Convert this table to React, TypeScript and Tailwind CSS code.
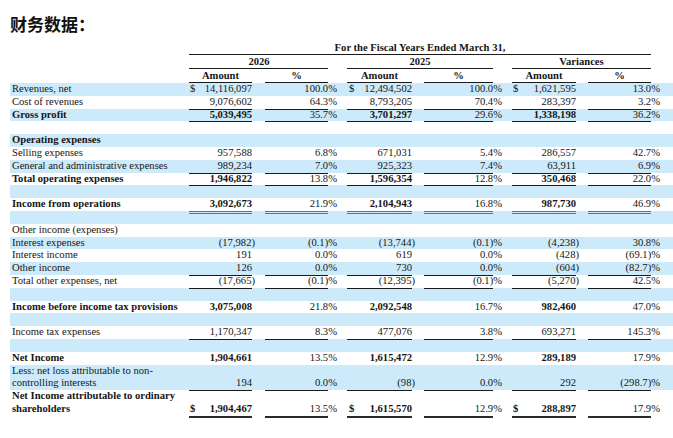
import React from "react";

const GRID =
  "grid grid-cols-[179px_63px_13px_63px_19px_65px_12px_69px_19px_64px_12px_63px_12px]";

type Line = "none" | "single" | "double" | "thick";

type RowProps = {
  label?: React.ReactNode;
  vals?: string[];
  bold?: boolean;
  dollar?: boolean;
  line?: Line;
  blue?: boolean;
  tall?: boolean;
};

function lineCls(line: Line) {
  if (line === "single") return "border-b border-[#1a1a1a]";
  if (line === "double") return "border-b-[3px] border-double border-[#6f6f6f]";
  if (line === "thick") return "border-b-2 border-[#2a2a2a]";
  return "";
}

function Amount({
  v,
  bold,
  dollar,
  line,
  tall,
  pl,
}: {
  v?: string;
  bold?: boolean;
  dollar?: boolean;
  line: Line;
  tall?: boolean;
  pl: string;
}) {
  const neg = v ? v.startsWith("(") : false;
  return (
    <div
      className={`flex justify-between whitespace-nowrap ${pl} ${lineCls(line)} ${
        tall ? "pt-[12.8px]" : ""
      } ${bold ? "font-bold" : ""}`}
    >
      <span>{dollar ? "$" : ""}</span>
      <span className={neg ? "mr-[-3px]" : ""}>{v ?? ""}</span>
    </div>
  );
}

function Pct({ v, line, tall }: { v?: string; line: Line; tall?: boolean }) {
  return (
    <div
      className={`flex justify-end ${lineCls(line)} ${tall ? "pt-[12.8px]" : ""}`}
    >
      <span className="mr-[-9px] whitespace-nowrap">{v ?? ""}</span>
    </div>
  );
}

function Row({ label, vals, bold, dollar, line = "none", blue, tall }: RowProps) {
  const l: Line = vals ? line : "none";
  return (
    <div
      className={`${GRID} ${tall ? "h-[25.6px]" : "h-[12.8px]"} ${
        blue ? "bg-[#cdeafa]" : "bg-white"
      }`}
    >
      <div className={`pl-[2px] whitespace-nowrap ${bold ? "font-bold" : ""}`}>
        {label}
      </div>
      <Amount v={vals?.[0]} bold={bold} dollar={dollar} line={l} tall={tall} pl="pl-[1px]" />
      <div />
      <Pct v={vals?.[1]} line={l} tall={tall} />
      <div />
      <Amount v={vals?.[2]} bold={bold} dollar={dollar} line={l} tall={tall} pl="pl-[2px]" />
      <div />
      <Pct v={vals?.[3]} line={l} tall={tall} />
      <div />
      <Amount v={vals?.[4]} bold={bold} dollar={dollar} line={l} tall={tall} pl="pl-[1px]" />
      <div />
      <Pct v={vals?.[5]} line={l} tall={tall} />
      <div />
    </div>
  );
}

export default function App() {
  return (
    <div className="w-[673px] h-[438px] overflow-hidden bg-white text-[#161616]">
      <div className="h-[41px] pl-[10px] pt-[12px]">
        <div className="text-[17px] leading-[24px] font-bold font-['Noto_Sans_CJK_SC','Noto_Sans',sans-serif] text-[#111]">
          财务数据：
        </div>
      </div>
      <div className="pl-[10px] font-['Liberation_Serif','Times_New_Roman',serif] text-[10.6px] leading-[12.8px]">
        {/* header row A */}
        <div className={`${GRID} h-[14px] font-bold leading-[13px]`}>
          <div />
          <div className="col-span-11 border-b border-[#1a1a1a] text-center">
            For the Fiscal Years Ended March 31,
          </div>
          <div />
        </div>
        {/* header row B */}
        <div className={`${GRID} h-[14px] font-bold leading-[13px]`}>
          <div />
          <div className="col-span-3 border-b border-[#1a1a1a] text-center pl-[1px]">2026</div>
          <div />
          <div className="col-span-3 border-b border-[#1a1a1a] text-center">2025</div>
          <div />
          <div className="col-span-3 border-b border-[#1a1a1a] text-center">Variances</div>
          <div />
        </div>
        {/* header row C */}
        <div className={`${GRID} h-[14px] font-bold leading-[13px]`}>
          <div />
          <div className="border-b border-[#1a1a1a] text-center">Amount</div>
          <div />
          <div className="border-b border-[#1a1a1a] text-center">%</div>
          <div />
          <div className="border-b border-[#1a1a1a] text-center">Amount</div>
          <div />
          <div className="border-b border-[#1a1a1a] text-center">%</div>
          <div />
          <div className="border-b border-[#1a1a1a] text-center">Amount</div>
          <div />
          <div className="border-b border-[#1a1a1a] text-center">%</div>
          <div />
        </div>

        <Row
          blue
          dollar
          label="Revenues, net"
          vals={["14,116,097", "100.0%", "12,494,502", "100.0%", "1,621,595", "13.0%"]}
        />
        <Row
          label="Cost of revenues"
          line="single"
          vals={["9,076,602", "64.3%", "8,793,205", "70.4%", "283,397", "3.2%"]}
        />
        <Row
          blue
          bold
          label="Gross profit"
          line="single"
          vals={["5,039,495", "35.7%", "3,701,297", "29.6%", "1,338,198", "36.2%"]}
        />
        <Row />
        <Row blue bold label="Operating expenses" />
        <Row
          label="Selling expenses"
          vals={["957,588", "6.8%", "671,031", "5.4%", "286,557", "42.7%"]}
        />
        <Row
          blue
          label="General and administrative expenses"
          line="single"
          vals={["989,234", "7.0%", "925,323", "7.4%", "63,911", "6.9%"]}
        />
        <Row
          bold
          label="Total operating expenses"
          line="single"
          vals={["1,946,822", "13.8%", "1,596,354", "12.8%", "350,468", "22.0%"]}
        />
        <Row blue />
        <Row
          bold
          label="Income from operations"
          line="double"
          vals={["3,092,673", "21.9%", "2,104,943", "16.8%", "987,730", "46.9%"]}
        />
        <Row blue />
        <Row label="Other income (expenses)" />
        <Row
          blue
          label="Interest expenses"
          vals={["(17,982)", "(0.1)%", "(13,744)", "(0.1)%", "(4,238)", "30.8%"]}
        />
        <Row
          label="Interest income"
          vals={["191", "0.0%", "619", "0.0%", "(428)", "(69.1)%"]}
        />
        <Row
          blue
          label="Other income"
          line="single"
          vals={["126", "0.0%", "730", "0.0%", "(604)", "(82.7)%"]}
        />
        <Row
          label="Total other expenses, net"
          line="single"
          vals={["(17,665)", "(0.1)%", "(12,395)", "(0.1)%", "(5,270)", "42.5%"]}
        />
        <Row blue />
        <Row
          bold
          label="Income before income tax provisions"
          vals={["3,075,008", "21.8%", "2,092,548", "16.7%", "982,460", "47.0%"]}
        />
        <Row blue />
        <Row
          label="Income tax expenses"
          line="single"
          vals={["1,170,347", "8.3%", "477,076", "3.8%", "693,271", "145.3%"]}
        />
        <Row blue />
        <Row
          bold
          label="Net Income"
          vals={["1,904,661", "13.5%", "1,615,472", "12.9%", "289,189", "17.9%"]}
        />
        <Row
          blue
          tall
          line="single"
          label={
            <>
              Less: net loss attributable to non-
              <br />
              controlling interests
            </>
          }
          vals={["194", "0.0%", "(98)", "0.0%", "292", "(298.7)%"]}
        />
        <Row
          tall
          bold
          dollar
          line="thick"
          label={
            <>
              Net Income attributable to ordinary
              <br />
              shareholders
            </>
          }
          vals={["1,904,467", "13.5%", "1,615,570", "12.9%", "288,897", "17.9%"]}
        />
      </div>
    </div>
  );
}
